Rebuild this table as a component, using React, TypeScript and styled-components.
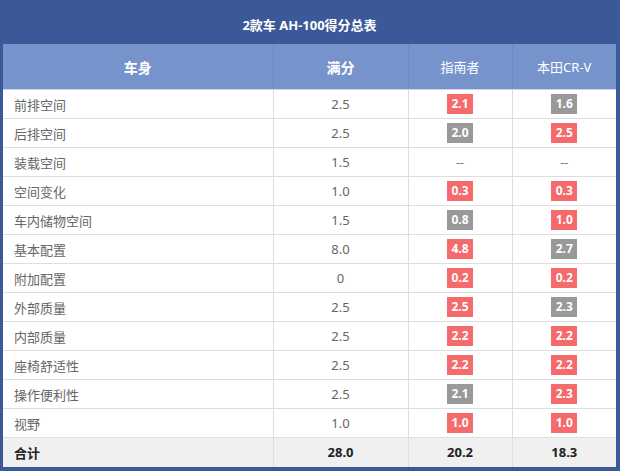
import styled, { createGlobalStyle } from "styled-components";

const GlobalStyle = createGlobalStyle`
  body {
    margin: 0;
    font-family: "Noto Sans", "Noto Sans CJK SC", sans-serif;
  }
`;

const Frame = styled.div`
  width: 620px;
  height: 471px;
  box-sizing: border-box;
  background: #3b5998;
  padding: 0 4px 4px 3px;
`;

const Title = styled.div`
  height: 44px;
  box-sizing: border-box;
  padding-top: 5px;
  display: flex;
  align-items: center;
  justify-content: center;
  color: #fff;
  font-size: 13px;
  font-weight: 700;
`;

const Table = styled.table`
  width: 613px;
  border-collapse: collapse;
  table-layout: fixed;
  background: #fff;
`;

const HeadCell = styled.th<{ $bold?: boolean }>`
  height: 45px;
  padding: 0;
  background: #7694cb;
  color: #fff;
  font-size: ${(p) => (p.$bold ? "14px" : "13px")};
  font-weight: ${(p) => (p.$bold ? 700 : 400)};
  text-align: center;
  border-left: 1px solid #6a88c2;
  border-bottom: 1px solid #c9d6ee;
  &:first-child {
    border-left: none;
  }
`;

const Row = styled.tr<{ $total?: boolean }>`
  height: 29px;
  background: ${(p) => (p.$total ? "#f0f0f0" : "#fff")};
  color: ${(p) => (p.$total ? "#222" : "#666")};
  font-weight: ${(p) => (p.$total ? 700 : 400)};
`;

const Cell = styled.td<{ $left?: boolean }>`
  padding: 0 0 0 ${(p) => (p.$left ? "11px" : "0")};
  font-size: 13px;
  text-align: ${(p) => (p.$left ? "left" : "center")};
  border-left: 1px solid #ddd;
  border-top: 1px solid #ddd;
  &:first-child {
    border-left: none;
  }
`;

const Badge = styled.span<{ $hi: boolean }>`
  display: inline-block;
  width: 26px;
  height: 20px;
  line-height: 20px;
  background: ${(p) => (p.$hi ? "#f56a6b" : "#999")};
  color: #fff;
  font-size: 12px;
  font-weight: 700;
  vertical-align: middle;
`;

const Dash = styled.span`
  color: #777;
  font-size: 12px;
`;

type Item = { name: string; full: string; a: string | null; b: string | null; aHi: boolean; bHi: boolean };

const rows: Item[] = [
  { name: "前排空间", full: "2.5", a: "2.1", b: "1.6", aHi: true, bHi: false },
  { name: "后排空间", full: "2.5", a: "2.0", b: "2.5", aHi: false, bHi: true },
  { name: "装载空间", full: "1.5", a: null, b: null, aHi: false, bHi: false },
  { name: "空间变化", full: "1.0", a: "0.3", b: "0.3", aHi: true, bHi: true },
  { name: "车内储物空间", full: "1.5", a: "0.8", b: "1.0", aHi: false, bHi: true },
  { name: "基本配置", full: "8.0", a: "4.8", b: "2.7", aHi: true, bHi: false },
  { name: "附加配置", full: "0", a: "0.2", b: "0.2", aHi: true, bHi: true },
  { name: "外部质量", full: "2.5", a: "2.5", b: "2.3", aHi: true, bHi: false },
  { name: "内部质量", full: "2.5", a: "2.2", b: "2.2", aHi: true, bHi: true },
  { name: "座椅舒适性", full: "2.5", a: "2.2", b: "2.2", aHi: true, bHi: true },
  { name: "操作便利性", full: "2.5", a: "2.1", b: "2.3", aHi: false, bHi: true },
  { name: "视野", full: "1.0", a: "1.0", b: "1.0", aHi: true, bHi: true },
];

const Score = ({ value, hi }: { value: string | null; hi: boolean }) =>
  value ? <Badge $hi={hi}>{value}</Badge> : <Dash>--</Dash>;

export default function App() {
  return (
    <Frame>
      <GlobalStyle />
      <Title>2款车 AH-100得分总表</Title>
      <Table>
        <colgroup>
          <col style={{ width: 270 }} />
          <col style={{ width: 135 }} />
          <col style={{ width: 104 }} />
          <col style={{ width: 104 }} />
        </colgroup>
        <thead>
          <tr>
            <HeadCell $bold>车身</HeadCell>
            <HeadCell $bold>满分</HeadCell>
            <HeadCell>指南者</HeadCell>
            <HeadCell>本田CR-V</HeadCell>
          </tr>
        </thead>
        <tbody>
          {rows.map((r) => (
            <Row key={r.name}>
              <Cell $left>{r.name}</Cell>
              <Cell>{r.full}</Cell>
              <Cell>
                <Score value={r.a} hi={r.aHi} />
              </Cell>
              <Cell>
                <Score value={r.b} hi={r.bHi} />
              </Cell>
            </Row>
          ))}
          <Row $total>
            <Cell $left>合计</Cell>
            <Cell>28.0</Cell>
            <Cell>20.2</Cell>
            <Cell>18.3</Cell>
          </Row>
        </tbody>
      </Table>
    </Frame>
  );
}
